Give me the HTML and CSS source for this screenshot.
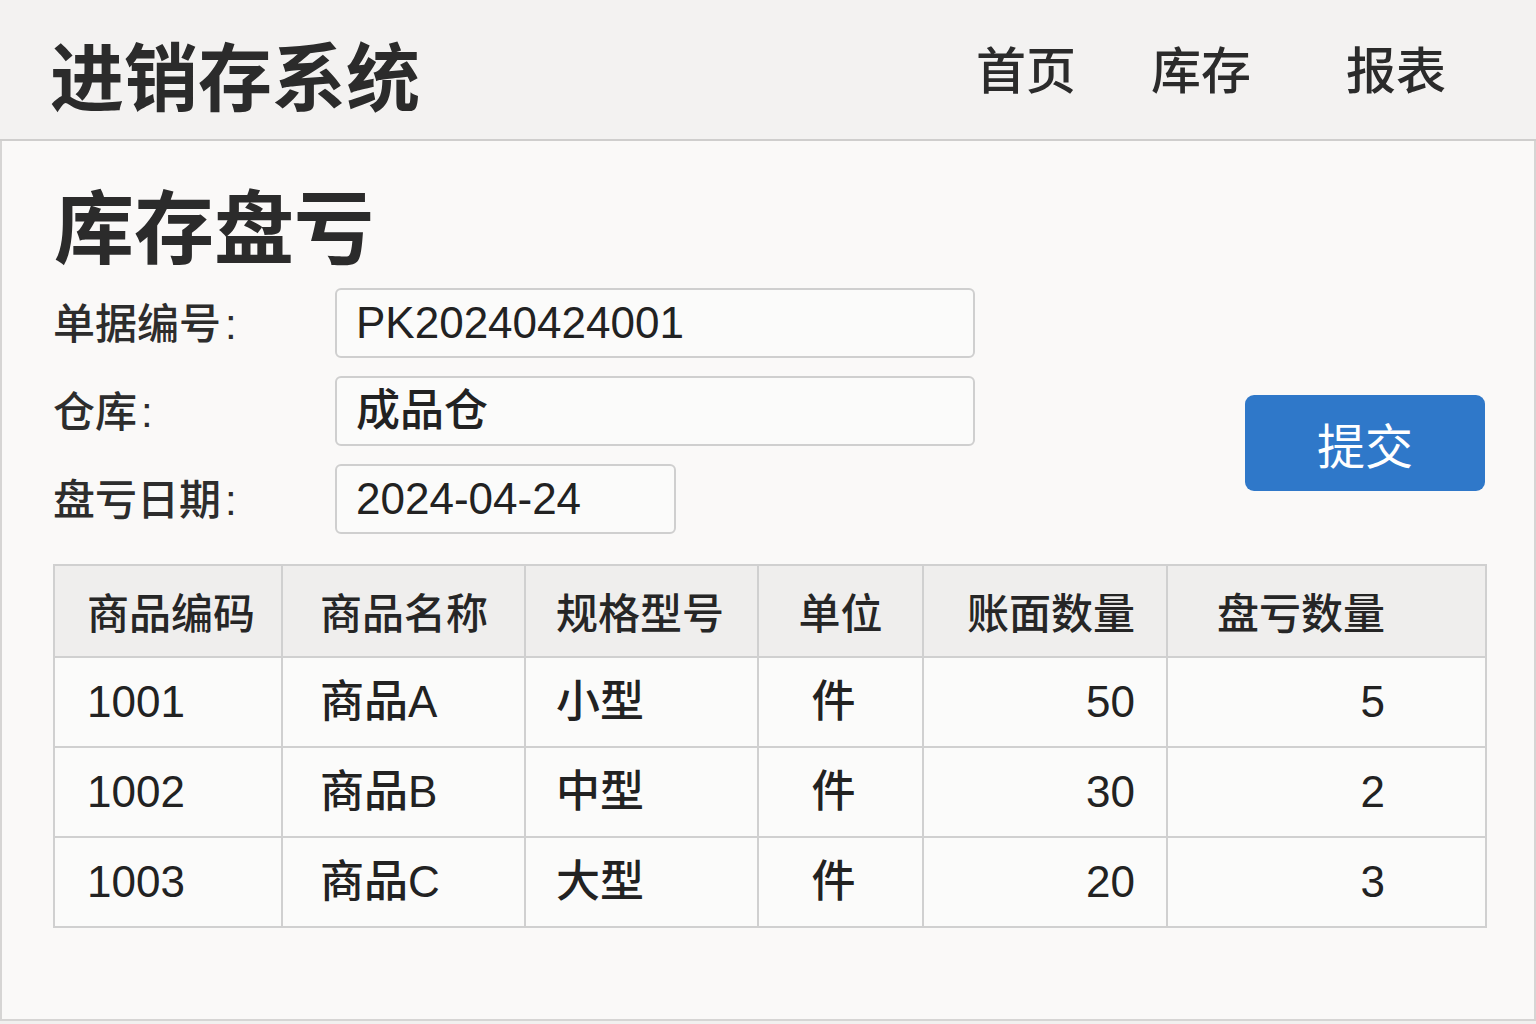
FILE: index.html
```html
<!DOCTYPE html>
<html lang="zh-CN">
<head>
<meta charset="utf-8">
<title>进销存系统</title>
<link rel="stylesheet" href="styles.css">
</head>
<body>
<header class="topbar">
  <div class="brand">进销存系统</div>
  <nav class="nav">
    <a class="nav-link">首页</a>
    <a class="nav-link">库存</a>
    <a class="nav-link nav-last">报表</a>
  </nav>
</header>
<main class="panel">
  <h1 class="page-title">库存盘亏</h1>
  <section class="form-area">
    <div class="fields">
      <div class="field-row">
        <label class="field-label">单据编号<span class="colon">:</span></label>
        <div class="input input-wide">PK20240424001</div>
      </div>
      <div class="field-row">
        <label class="field-label">仓库<span class="colon">:</span></label>
        <div class="input input-wide">成品仓</div>
      </div>
      <div class="field-row">
        <label class="field-label">盘亏日期<span class="colon">:</span></label>
        <div class="input input-narrow">2024-04-24</div>
      </div>
    </div>
    <button class="submit">提交</button>
  </section>
  <table class="grid">
    <thead>
      <tr>
        <th class="c1">商品编码</th>
        <th class="c2">商品名称</th>
        <th class="c3">规格型号</th>
        <th class="c4">单位</th>
        <th class="c5">账面数量</th>
        <th class="c6">盘亏数量</th>
      </tr>
    </thead>
    <tbody>
      <tr>
        <td class="c1">1001</td>
        <td class="c2">商品A</td>
        <td class="c3">小型</td>
        <td class="c4">件</td>
        <td class="c5">50</td>
        <td class="c6">5</td>
      </tr>
      <tr>
        <td class="c1">1002</td>
        <td class="c2">商品B</td>
        <td class="c3">中型</td>
        <td class="c4">件</td>
        <td class="c5">30</td>
        <td class="c6">2</td>
      </tr>
      <tr>
        <td class="c1">1003</td>
        <td class="c2">商品C</td>
        <td class="c3">大型</td>
        <td class="c4">件</td>
        <td class="c5">20</td>
        <td class="c6">3</td>
      </tr>
    </tbody>
  </table>
</main>
</body>
</html>
```
FILE: styles.css
```css
* { box-sizing: border-box; }
html, body {
  margin: 0;
  padding: 0;
  background: #f1f0ef;
}
body {
  font-family: "Noto Sans CJK SC", "Liberation Sans", sans-serif;
  color: #2a2a2a;
  width: 1536px;
  height: 1024px;
  overflow: hidden;
}
.topbar {
  height: 141px;
  background: #f3f2f1;
  border-bottom: 2px solid #cfcecd;
  display: flex;
  align-items: center;
  justify-content: space-between;
  padding: 6px 90px 0 50px;
}
.brand {
  font-size: 74px;
  font-weight: 700;
  line-height: 1;
  color: #2b2b2b;
}
.nav {
  display: flex;
  gap: 75px;
  margin-top: -12px;
}
.nav-link {
  font-size: 50px;
  font-weight: 500;
  line-height: 1;
  color: #2b2b2b;
}
.nav-last { margin-left: 20px; }
.panel {
  height: 880px;
  background: #faf9f8;
  border: 2px solid #d6d5d4;
  border-top: none;
  padding: 41px 49px 0 51px;
}
.page-title {
  margin: 0 0 0 1px;
  font-size: 80px;
  font-weight: 700;
  line-height: 1;
  color: #2b2b2b;
  height: 106px;
}
.form-area {
  display: flex;
  justify-content: space-between;
  align-items: flex-start;
}
.fields {
  display: flex;
  flex-direction: column;
  gap: 18px;
}
.field-row {
  display: flex;
  align-items: center;
}
.field-label {
  width: 282px;
  padding-left: 0;
  font-size: 42px;
  font-weight: 500;
  color: #2d2d2d;
  line-height: 1;
}
.colon {
  font-family: "Liberation Sans", sans-serif;
  margin-left: 4px;
}
.input {
  height: 70px;
  border: 2px solid #cfcfcf;
  border-radius: 6px;
  background: #fbfbfa;
  display: flex;
  align-items: center;
  padding-left: 19px;
  font-size: 44px;
  font-weight: 500;
  color: #222;
  line-height: 1;
  font-family: "Liberation Sans", "Noto Sans CJK SC", sans-serif;
}
.input-wide { width: 640px; }
.input-narrow { width: 341px; }
.submit {
  margin-top: 107px;
  width: 240px;
  height: 96px;
  border: none;
  border-radius: 9px;
  background: #2f78c9;
  color: #ffffff;
  font-family: "Noto Sans CJK SC", sans-serif;
  font-size: 48px;
  font-weight: 400;
  line-height: 1;
  padding: 0;
}
.grid {
  margin-top: 30px;
  width: 1432px;
  border-collapse: collapse;
  border: 2px solid #cdcdcd;
  table-layout: fixed;
}
.grid th, .grid td {
  border: 2px solid #d0d0d0;
  font-size: 42px;
  line-height: 1;
  padding: 0;
  white-space: nowrap;
}
.grid th {
  height: 92px;
  background: #efeeed;
  font-weight: 500;
  color: #262626;
}
.grid td {
  height: 90px;
  background: #fbfbfa;
  font-weight: 500;
  color: #222;
  font-family: "Liberation Sans", "Noto Sans CJK SC", sans-serif;
  font-size: 44px;
}
.c1 { width: 228px; text-align: left; padding-left: 32px !important; }
.c2 { width: 243px; text-align: left; padding-left: 37px !important; }
.c3 { width: 233px; text-align: left; padding-left: 30px !important; }
.c4 { width: 165px; text-align: center; }
.grid td.c4 { padding-right: 14px; }
.c5 { width: 244px; text-align: right; padding-right: 31px !important; }
.c6 { width: 319px; text-align: right; padding-right: 100px !important; }
```
